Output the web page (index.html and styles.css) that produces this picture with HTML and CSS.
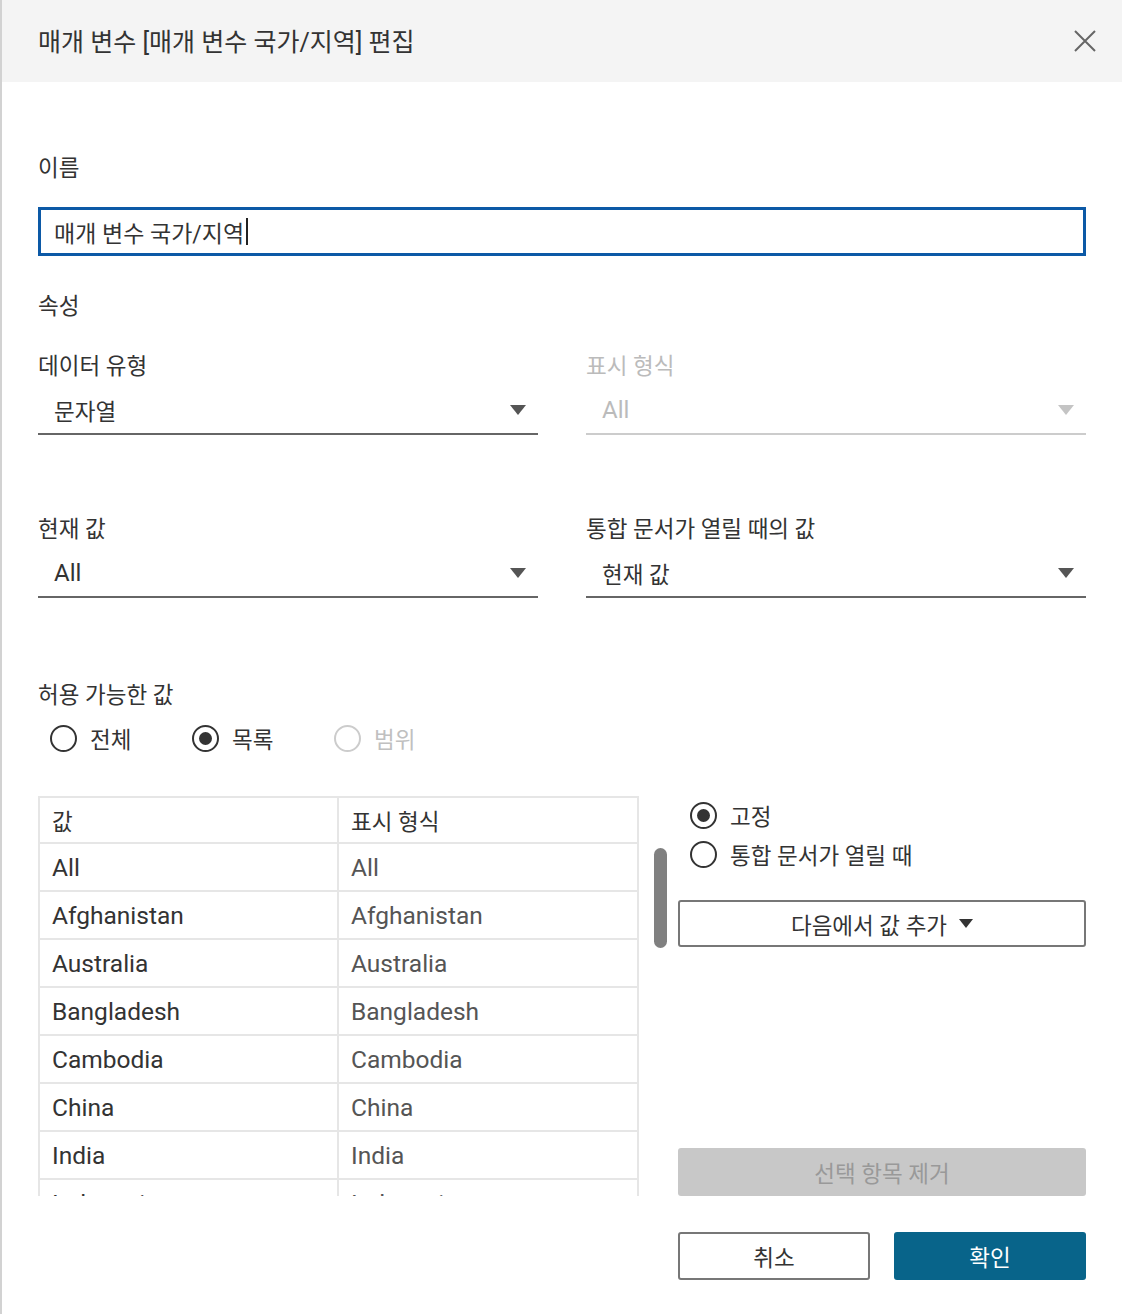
FILE: index.html
```html
<!DOCTYPE html>
<html lang="ko">
<head>
<meta charset="utf-8">
<title>매개 변수 편집</title>
<link rel="stylesheet" href="styles.css">
</head>
<body>
<div class="dialog">
  <div class="header">
    <div class="title">매개 변수 [매개 변수 국가/지역] 편집</div>
    <svg class="close" width="24" height="24" viewBox="0 0 24 24"><path d="M2 2L22 22M22 2L2 22" stroke="#666" stroke-width="2" fill="none"/></svg>
  </div>
  <div class="content">
    <div class="label lbl-name">이름</div>
    <div class="name-input"><span>매개 변수 국가/지역</span><span class="caret"></span></div>
    <div class="label lbl-props">속성</div>

    <div class="grid2 row1">
      <div class="field">
        <div class="label">데이터 유형</div>
        <div class="select"><span>문자열</span><span class="tri"></span></div>
      </div>
      <div class="field disabled">
        <div class="label">표시 형식</div>
        <div class="select"><span class="en">All</span><span class="tri"></span></div>
      </div>
    </div>

    <div class="grid2 row2">
      <div class="field">
        <div class="label">현재 값</div>
        <div class="select"><span class="en">All</span><span class="tri"></span></div>
      </div>
      <div class="field">
        <div class="label">통합 문서가 열릴 때의 값</div>
        <div class="select"><span>현재 값</span><span class="tri"></span></div>
      </div>
    </div>

    <div class="label lbl-allowed">허용 가능한 값</div>
    <div class="radios">
      <div class="radio"><span class="dot"></span>전체</div>
      <div class="radio on"><span class="dot"></span>목록</div>
      <div class="radio off"><span class="dot"></span>범위</div>
    </div>

    <div class="list-area">
      <div class="table">
        <div class="tr th"><div class="td">값</div><div class="td">표시 형식</div></div>
        <div class="tr"><div class="td">All</div><div class="td">All</div></div>
        <div class="tr"><div class="td">Afghanistan</div><div class="td">Afghanistan</div></div>
        <div class="tr"><div class="td">Australia</div><div class="td">Australia</div></div>
        <div class="tr"><div class="td">Bangladesh</div><div class="td">Bangladesh</div></div>
        <div class="tr"><div class="td">Cambodia</div><div class="td">Cambodia</div></div>
        <div class="tr"><div class="td">China</div><div class="td">China</div></div>
        <div class="tr"><div class="td">India</div><div class="td">India</div></div>
        <div class="tr"><div class="td">Indonesia</div><div class="td">Indonesia</div></div>
      </div>
      <div class="scroll"><div class="thumb"></div></div>
      <div class="side">
        <div class="radio on"><span class="dot"></span>고정</div>
        <div class="radio"><span class="dot"></span>통합 문서가 열릴 때</div>
        <div class="btn add">다음에서 값 추가<span class="tri small"></span></div>
        <div class="spacer"></div>
        <div class="btn remove">선택 항목 제거</div>
      </div>
    </div>

    <div class="footer">
      <div class="btn cancel">취소</div>
      <div class="btn ok">확인</div>
    </div>
  </div>
</div>
</body>
</html>
```
FILE: styles.css
```css
* { box-sizing: border-box; }
html, body { margin: 0; padding: 0; background: #fff; }
body {
  font-family: Roboto, "Noto Sans CJK KR", sans-serif;
  color: #333;
  font-size: 22.5px;
}
.dialog {
  width: 1122px;
  height: 1314px;
  border-left: 2px solid #d2d2d2;
  overflow: hidden;
}
.header {
  height: 82px;
  background: #f4f4f4;
  display: flex;
  align-items: center;
  justify-content: space-between;
  padding: 0 25px 0 36px;
}
.title { font-size: 25px; color: #333; line-height: 30px; padding-top: 4px; }
.close { display: block; }
.content { padding: 69px 36px 0 36px; }
.label { line-height: 34px; height: 30px; white-space: nowrap; }
.en { font-size: 24px; }
.name-input {
  margin-top: 26px;
  height: 49px;
  border: 3px solid #0c59a6;
  display: flex;
  align-items: center;
  padding-left: 13px;
  font-size: 23px;
}
.caret { display: inline-block; width: 2px; height: 27px; background: #222; margin-left: 2px; }
.lbl-props { margin-top: 33px; }
.grid2 {
  display: grid;
  grid-template-columns: 500px 500px;
  column-gap: 48px;
}
.row1 { margin-top: 30px; }
.row2 { margin-top: 77px; }
.select {
  margin-top: 8px;
  height: 48px;
  border-bottom: 2px solid #666;
  display: flex;
  align-items: center;
  justify-content: space-between;
  padding: 0 12px 0 16px;
}
.tri {
  width: 0; height: 0;
  border-left: 8px solid transparent;
  border-right: 8px solid transparent;
  border-top: 10px solid #555;
}
.tri.small {
  display: inline-block;
  border-left-width: 7px;
  border-right-width: 7px;
  border-top-width: 9px;
  border-top-color: #333;
  margin-left: 12px;
}
.disabled { color: #bbb; }
.disabled .select { border-bottom-color: #ccc; }
.disabled .tri { border-top-color: #c4c4c4; }
.lbl-allowed { margin-top: 80px; }
.radios {
  margin-top: 15px;
  display: flex;
  padding-left: 12px;
}
.radios .radio { width: 142px; }
.radio {
  display: flex;
  align-items: center;
  height: 30px;
  white-space: nowrap;
}
.dot {
  width: 27px; height: 27px;
  border: 2px solid #333;
  border-radius: 50%;
  margin-right: 13px;
  display: flex;
  align-items: center;
  justify-content: center;
  flex: none;
}
.radio.on .dot::after {
  content: "";
  width: 13px; height: 13px;
  border-radius: 50%;
  background: #333;
}
.radio.off { color: #c0c0c0; }
.radio.off .dot { border-color: #ccc; }
.list-area {
  margin-top: 43px;
  display: flex;
  height: 400px;
}
.table {
  width: 601px;
  height: 400px;
  overflow: hidden;
  border-top: 2px solid #e6e6e6;
  border-left: 2px solid #e6e6e6;
  flex: none;
}
.tr {
  display: grid;
  grid-template-columns: 299px 300px;
  height: 48px;
  border-bottom: 2px solid #e6e6e6;
  font-size: 24.5px;
}
.th { height: 46px; font-size: 22.5px; }
.td {
  padding-left: 12px;
  display: flex;
  align-items: center;
  border-right: 2px solid #e6e6e6;
  white-space: nowrap;
}
.tr:not(.th) .td + .td { color: #555; }
.scroll { width: 39px; flex: none; padding: 52px 0 0 15px; }
.thumb { width: 13px; height: 100px; border-radius: 7px; background: #808080; }
.side {
  flex: 1;
  display: flex;
  flex-direction: column;
}
.side .radio { padding-left: 12px; height: 30px; }
.side .radio + .radio { margin-top: 9px; }
.side .radio:first-child { margin-top: 4px; }
.btn {
  height: 48px;
  display: flex;
  align-items: center;
  justify-content: center;
  border-radius: 3px;
  white-space: nowrap;
}
.add { margin-top: 31px; height: 47px; border: 2px solid #777; color: #333; }
.spacer { flex: 1; }
.remove { background: #c8c8c8; color: #999; }
.footer {
  margin-top: 36px;
  display: flex;
  justify-content: flex-end;
  gap: 24px;
}
.cancel { width: 192px; border: 2px solid #777; color: #333; }
.ok { width: 192px; background: #08648a; color: #fff; }
```
